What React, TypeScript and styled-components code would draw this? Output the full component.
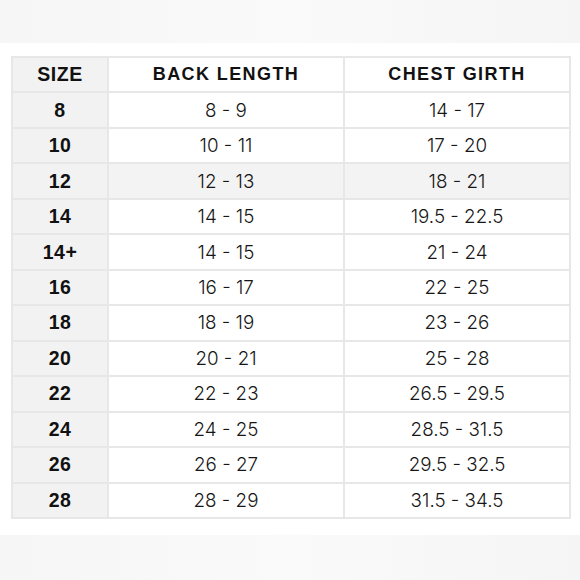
import styled, { createGlobalStyle } from 'styled-components';

const GlobalStyle = createGlobalStyle`
	html, body {
		margin: 0;
		padding: 0;
		background: #ffffff;
	}
`;

const rows: [string, string, string][] = [
	['8', '8 - 9', '14 - 17'],
	['10', '10 - 11', '17 - 20'],
	['12', '12 - 13', '18 - 21'],
	['14', '14 - 15', '19.5 - 22.5'],
	['14+', '14 - 15', '21 - 24'],
	['16', '16 - 17', '22 - 25'],
	['18', '18 - 19', '23 - 26'],
	['20', '20 - 21', '25 - 28'],
	['22', '22 - 23', '26.5 - 29.5'],
	['24', '24 - 25', '28.5 - 31.5'],
	['26', '26 - 27', '29.5 - 32.5'],
	['28', '28 - 29', '31.5 - 34.5'],
];

function App() {
	return (
		<Page>
			<GlobalStyle />
			<Band />
			<Main>
				<Table>
					<SizeCell>SIZE</SizeCell>
					<HeadCell>BACK LENGTH</HeadCell>
					<HeadCell>CHEST GIRTH</HeadCell>
					{rows.map(([size, back, chest]) => (
						<Row key={size}>
							<SizeCell>{size}</SizeCell>
							<Cell $shaded={size === '12'}>{back}</Cell>
							<Cell $shaded={size === '12'}>{chest}</Cell>
						</Row>
					))}
				</Table>
			</Main>
			<Band $grow />
		</Page>
	);
}

export default App;

const Page = styled.div`
	width: 580px;
	height: 580px;
	display: flex;
	flex-direction: column;
	overflow: hidden;
`;

const Band = styled.div<{ $grow?: boolean }>`
	height: 43px;
	flex: ${props => (props.$grow ? '1' : 'none')};
	background: linear-gradient(90deg, #f6f6f6, #fafafa 50%, #f5f5f5);
`;

const Main = styled.div`
	padding: 13px 9px 16px 11px;
	background: #ffffff;
`;

const Table = styled.div`
	width: 560px;
	height: 463px;
	box-sizing: border-box;
	display: grid;
	grid-template-columns: 94px 234px 224px;
	grid-template-rows: repeat(13, 1fr);
	gap: 2px;
	padding: 2px;
	background: #e7e7e7;
`;

const Row = styled.div`
	display: contents;
`;

const BaseCell = styled.div`
	display: flex;
	align-items: center;
	justify-content: center;
	font-family: 'Liberation Sans', Arial, sans-serif;
	color: #111111;
`;

const SizeCell = styled(BaseCell)`
	background: #f2f2f2;
	font-weight: 700;
	font-size: 19.5px;
	letter-spacing: 0.5px;
`;

const HeadCell = styled(BaseCell)`
	background: #ffffff;
	font-weight: 700;
	font-size: 18px;
	letter-spacing: 1.4px;
`;

const Cell = styled(BaseCell)<{ $shaded?: boolean }>`
	background: ${props => (props.$shaded ? '#f3f3f3' : '#ffffff')};
	font-family: Inter, 'Liberation Sans', sans-serif;
	font-weight: 300;
	font-size: 18.8px;
	color: #161616;
`;
